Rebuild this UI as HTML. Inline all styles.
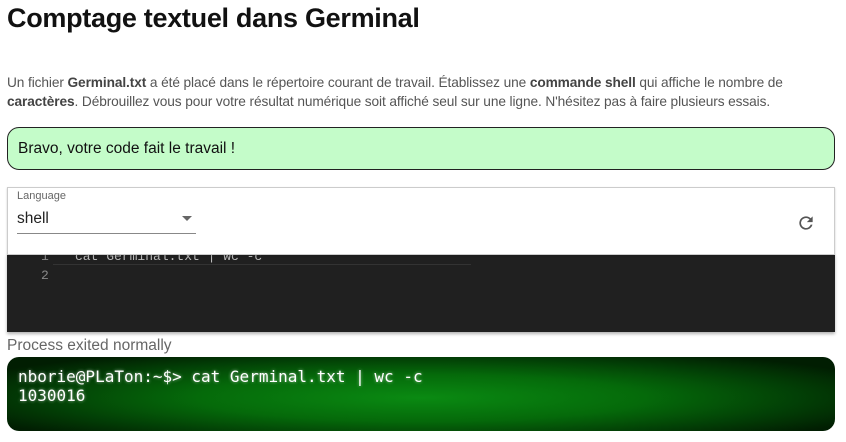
<!DOCTYPE html>
<html><head><meta charset="utf-8"><style>
body{margin:0;width:846px;height:442px;background:#fff;font-family:"Liberation Sans",sans-serif;position:relative;overflow:hidden}
h1{position:absolute;left:7px;top:3px;margin:0;font-size:27px;font-weight:bold;color:#111;letter-spacing:-0.3px}
p{position:absolute;left:7px;top:74px;margin:0;font-size:13.7px;line-height:18.5px;color:#555;width:805px;letter-spacing:-0.1px}
p b{color:#444}
.ok{position:absolute;left:7px;top:127px;width:828px;height:43px;border:1px solid #222;border-radius:12px;background:#c4fcc9;box-sizing:border-box;font-size:15.5px;padding:12px 10px;color:#111}
.lang{position:absolute;left:7px;top:187px;width:828px;height:68px;border:1px solid #ccc;box-sizing:border-box;background:#fff;box-shadow:0 1px 2px rgba(0,0,0,.2);z-index:2}
.lang .l{position:absolute;left:9px;top:2px;font-size:11px;color:#666}
.lang .v{position:absolute;left:9px;top:22px;font-size:15.5px;color:#222}
.lang .u{position:absolute;left:9px;top:45px;width:179px;height:1px;background:#888}
.lang .tri{position:absolute;left:174px;top:28px;width:0;height:0;border-left:5px solid transparent;border-right:5px solid transparent;border-top:5px solid #666}
.ed{position:absolute;left:7px;top:254px;width:828px;height:78px;background:#202020;font-family:"Liberation Mono",monospace;font-size:13px;color:#888;box-shadow:0 2px 3px rgba(0,0,0,.3)}
.ed .n1{position:absolute;left:34px;top:-5px}
.ed .n2{position:absolute;left:34px;top:14px}
.ed .c{position:absolute;left:68px;top:-5px;color:#bbb}
.ed .hl{position:absolute;left:46px;top:10px;width:418px;height:1px;background:#333}
.pe{position:absolute;left:7px;top:337px;font-size:15.5px;color:#666}
.term{position:absolute;left:7px;top:357px;width:828px;height:74px;border-radius:12px;background:radial-gradient(ellipse 60% 70% at 50% 55%,#0a8a12 0%,#056a0a 45%,#023a05 80%,#011e02 100%);font-family:"DejaVu Sans Mono",monospace;font-size:16px;color:#fff;padding:10px 11px;box-sizing:border-box;line-height:19px;text-shadow:0 0 3px rgba(255,255,255,.6)}
</style></head><body>
<h1>Comptage textuel dans Germinal</h1>
<p>Un fichier <b>Germinal.txt</b> a été placé dans le répertoire courant de travail. Établissez une <b>commande shell</b> qui affiche le nombre de <b>caractères</b>. Débrouillez vous pour votre résultat numérique soit affiché seul sur une ligne. N'hésitez pas à faire plusieurs essais.</p>
<div class="ok">Bravo, votre code fait le travail !</div>
<div class="lang"><div class="l">Language</div><div class="v">shell</div><div class="tri"></div><div class="u"></div>
<svg style="position:absolute;left:788px;top:25px" width="20" height="20" viewBox="0 0 24 24"><path fill="#555" d="M17.65 6.35A7.96 7.96 0 0 0 12 4a8 8 0 1 0 7.73 10h-2.08A6 6 0 1 1 12 6c1.66 0 3.140.69 4.22 1.78L13 11h7V4l-2.35 2.35z"/></svg></div>
<div class="ed"><div class="hl"></div><span class="n1">1</span><span class="n2">2</span><span class="c">cat Germinal.txt | wc -c</span></div>
<div class="pe">Process exited normally</div>
<div class="term">nborie@PLaTon:~$&gt; cat Germinal.txt | wc -c<br>1030016</div>
</body></html>
